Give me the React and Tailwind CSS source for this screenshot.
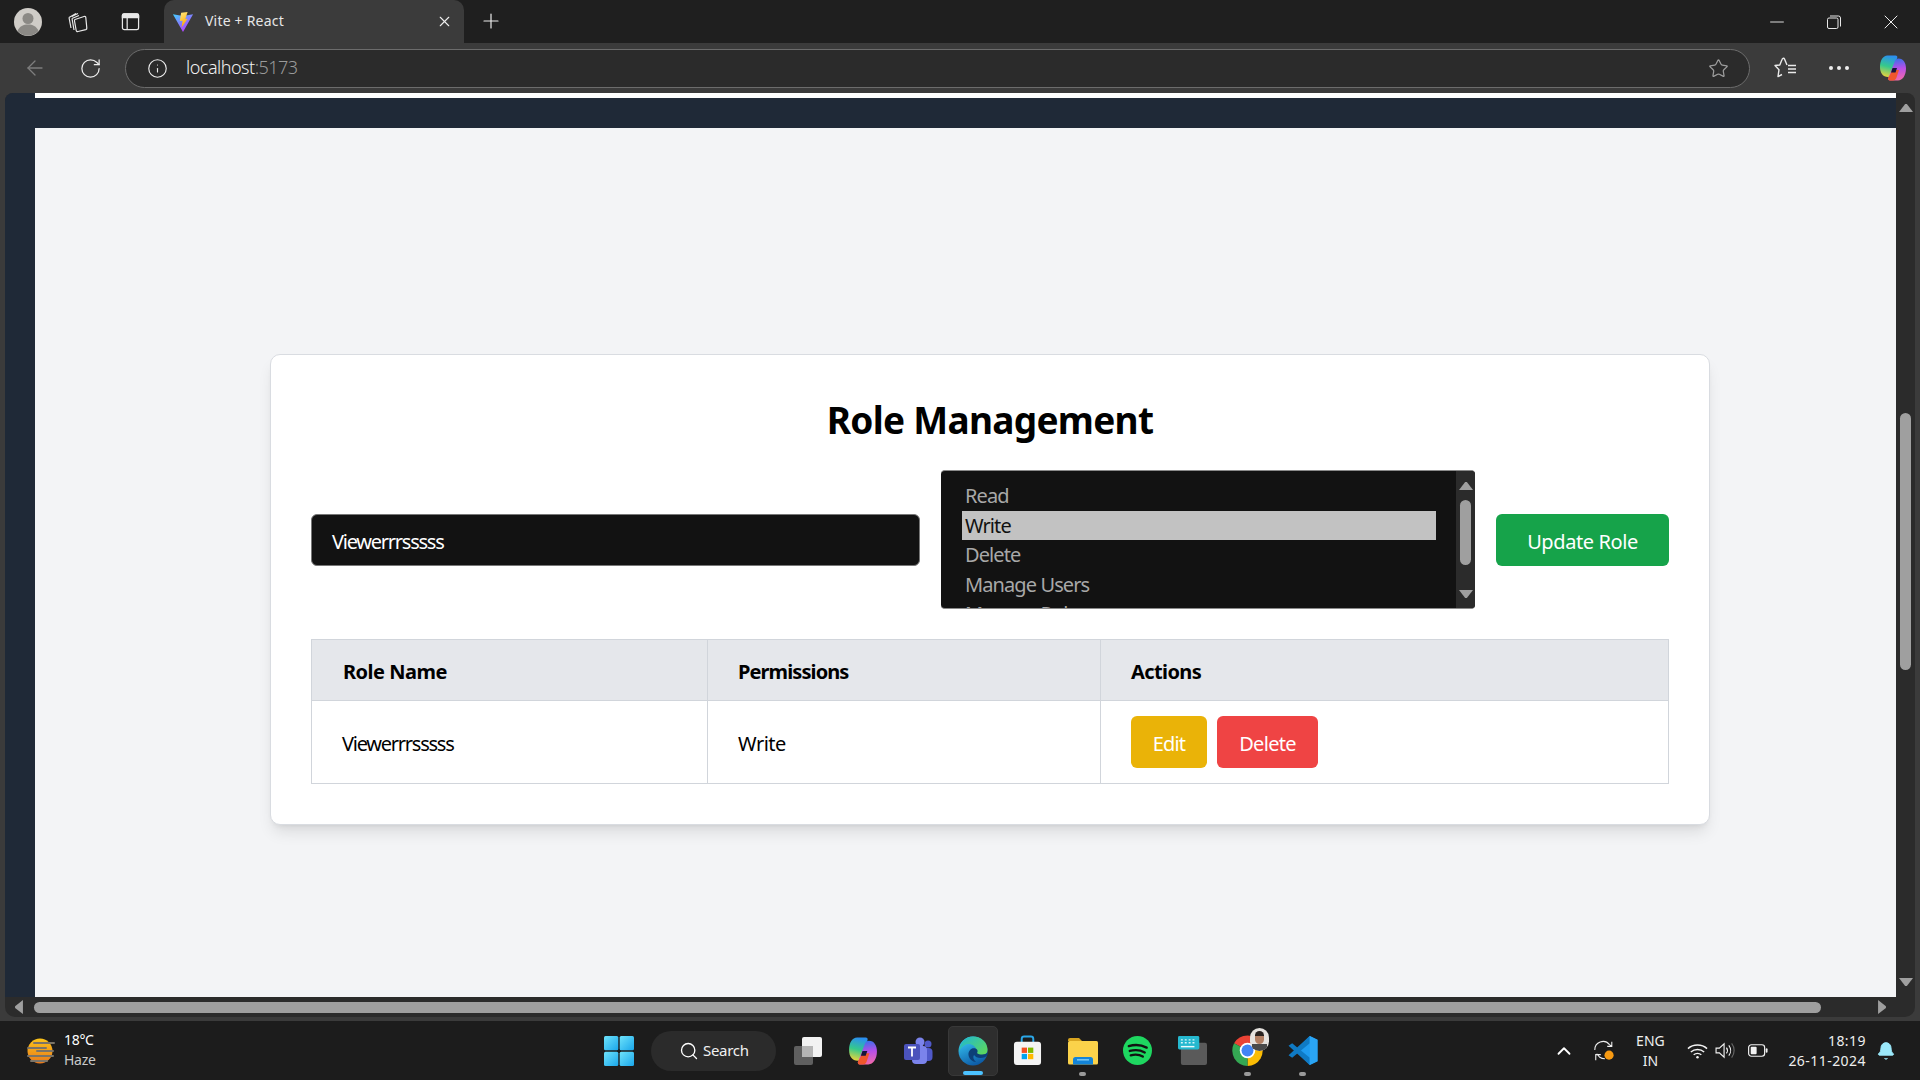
import { ArrowLeft, RotateCw, Info, Star, X, Plus, Minus, Search, ChevronUp, Bell } from 'lucide-react';

// Small triangle used by the native looking scrollbars
function Arrow({ dir, className }) {
    const points = {
        up: '0,10 7,1 9,1 16,10',
        down: '0,1 16,1 9,10 7,10',
        left: '10,0 10,16 1,9 1,7',
        right: '1,0 1,16 10,9 10,7',
    };
    const box = dir === 'up' || dir === 'down' ? '0 0 16 11' : '0 0 11 16';
    return (
        <svg viewBox={box} className={className} fill="#9f9f9f">
            <polygon points={points[dir]} />
        </svg>
    );
}

function Avatar() {
    return (
        <svg viewBox="0 0 28 28" className="w-[28px] h-[28px]">
            <circle cx="14" cy="14" r="14" fill="#cfccc7" />
            <circle cx="14" cy="10.500" r="5.500" fill="#8b8985" />
            <path d="M3.500 23c2-5 6-6.500 10.500-6.500s8.500 1.500 10.500 6.500a14 14 0 0 1-21 0z" fill="#8b8985" />
        </svg>
    );
}

function CollectionsIcon() {
    return (
        <svg viewBox="0 0 22 22" className="w-[22px] h-[22px]" fill="none" stroke="#e8e8e8" strokeWidth="1.200">
            <path d="M3 6.500 10 2.500M3 6.500 5 17M5.800 5.500 12 2.500" />
            <path d="M6 7.500 13 4.500M6 7.500 8 19" />
            <path d="M9 8.500 18 5.500c1-.3 1.700.2 1.800 1l1 10.500c.1.800-.3 1.400-1 1.600L12 20.500c-1 .2-1.700-.2-1.800-1L8.500 10c-.1-.7 0-1.200.5-1.500z" />
        </svg>
    );
}

function TabLayoutIcon() {
    return (
        <svg viewBox="0 0 20 20" className="w-[19px] h-[19px]" fill="none" stroke="#e8e8e8" strokeWidth="1.300">
            <rect x="1.500" y="2" width="17" height="16.500" rx="2" />
            <path d="M1.500 3.500a1.500 1.500 0 0 1 1.500-1.500h14a1.500 1.500 0 0 1 1.500 1.500V6h-17z" fill="#e8e8e8" />
            <path d="M6.500 6v12.500" />
        </svg>
    );
}

function ViteIcon() {
    return (
        <svg viewBox="0 0 24 24" className="w-[22px] h-[22px]">
            <defs>
                <linearGradient id="viteBody" x1="0" y1="0" x2="0.7" y2="1">
                    <stop offset="0" stopColor="#41d1ff" />
                    <stop offset="1" stopColor="#bd34fe" />
                </linearGradient>
                <linearGradient id="viteBolt" x1="0" y1="0" x2="0.3" y2="1">
                    <stop offset="0" stopColor="#ffea83" />
                    <stop offset="1" stopColor="#ffa800" />
                </linearGradient>
            </defs>
            <polygon points="1,3.500 12,5.500 23,3.500 12,23" fill="url(#viteBody)" />
            <polygon points="10,2 17,1 14.500,9 17,8.500 10.500,18 11.500,10.500 8.500,11" fill="url(#viteBolt)" />
        </svg>
    );
}

function RestoreIcon() {
    return (
        <svg viewBox="0 0 14 14" className="w-[14px] h-[14px]" fill="none" stroke="#e8e8e8" strokeWidth="1">
            <rect x="0.500" y="3" width="10.500" height="10.500" rx="1.500" />
            <path d="M3 1h8.500a2 2 0 0 1 2 2v8.500" />
        </svg>
    );
}

function FavoritesIcon() {
    return (
        <svg viewBox="0 0 24 22" className="w-[24px] h-[22px]" fill="none" stroke="#eaeaea" strokeWidth="1.400">
            <path d="M8 2.500 5.800 8 1 8.500l4 4.200L4 19.500l4-2" strokeLinejoin="round" />
            <path d="M8 2.500C9 1 10 1 10.500 2L13 8" />
            <path d="M14 12h8M14 15.500h8M14 8.500h8" />
        </svg>
    );
}

function CopilotIcon({ size }) {
    return (
        <svg viewBox="0 0 28 28" style={{ width: size, height: size }}>
            <defs>
                <linearGradient id={`copA${size}`} x1="0.5" y1="0" x2="0.3" y2="1">
                    <stop offset="0" stopColor="#2b8ff0" />
                    <stop offset="0.5" stopColor="#35c98c" />
                    <stop offset="1" stopColor="#efd43a" />
                </linearGradient>
                <linearGradient id={`copB${size}`} x1="0.5" y1="0" x2="0.6" y2="1">
                    <stop offset="0" stopColor="#3a6fe8" />
                    <stop offset="0.45" stopColor="#b64fe8" />
                    <stop offset="1" stopColor="#f36aa8" />
                </linearGradient>
            </defs>
            <path d="M8.500 1.500h8c1.500 0 2.200 1.200 1.700 2.500L12.500 20c-.8 2-1.800 3-3.500 3C4 23 1 19 1 13 1 6.500 4 1.500 8.500 1.500z" fill={`url(#copA${size})`} />
            <path d="M19.500 4.500c5 0 7.500 4.500 7.500 10 0 7-3.500 12-8 12h-8c-1.500 0-2.200-1.200-1.700-2.500L15.500 8c.6-2 2-3.500 4-3.500z" fill={`url(#copB${size})`} />
            <path d="M13.500 16h6.500l-2.500 7.500c-.5 1.500-1.500 3-3.500 3h-3c-1.500 0-2.200-1.200-1.700-2.500z" fill="#f0572c" />
            <path d="M13.500 14h4.500l-1.500 4.500H12z" fill="#16153a" />
        </svg>
    );
}

function TabStrip() {
    return (
        <div className="h-[43px] bg-[#1f1f1f] flex items-end shrink-0">
            <div className="w-[56px] h-[43px] flex items-center justify-center">
                <Avatar />
            </div>
            <div className="w-[42px] h-[43px] flex items-center justify-center">
                <CollectionsIcon />
            </div>
            <div className="w-[64px] h-[43px] flex items-center justify-center">
                <TabLayoutIcon />
            </div>
            <div className="ml-[2px] w-[300px] h-[43px] bg-[#3b3b3b] rounded-t-[10px] flex items-center px-[8px]">
                <ViteIcon />
                <span className="ml-[11px] mb-[2px] text-[14px] tracking-[0.2px] text-[#e6e6e6]">Vite + React</span>
                <X className="ml-auto mr-[3px] w-[17px] h-[17px] text-[#eeeeee]" strokeWidth={1.5} />
            </div>
            <div className="w-[54px] h-[43px] flex items-center justify-center pb-[1px]">
                <Plus className="w-[24px] h-[24px] text-[#eeeeee]" strokeWidth={1.2} />
            </div>
            <div className="ml-auto h-[43px] flex items-center text-[#eeeeee]">
                <div className="w-[57px] flex justify-center"><Minus className="w-[22px] h-[22px]" strokeWidth={1} /></div>
                <div className="w-[57px] flex justify-center"><RestoreIcon /></div>
                <div className="w-[58px] flex justify-center"><X className="w-[24px] h-[24px]" strokeWidth={1} /></div>
            </div>
        </div>
    );
}

function Toolbar() {
    return (
        <div className="h-[50px] bg-[#3b3b3b] flex items-center shrink-0">
            <div className="w-[70px] flex justify-center">
                <ArrowLeft className="w-[24px] h-[24px] text-[#7e7e7e]" strokeWidth={1.3} />
            </div>
            <div className="w-[40px] flex justify-center">
                <RotateCw className="w-[23px] h-[23px] text-[#eeeeee]" strokeWidth={1.3} />
            </div>
            <div className="ml-[15px] w-[1625px] h-[39px] rounded-full bg-[#2b2b2b] border border-[#6c6c6c] flex items-center pl-[21px] pr-[20px]">
                <Info className="w-[21px] h-[21px] text-[#eeeeee]" strokeWidth={1.3} />
                <span className="ml-[18px] mb-[2px] text-[18px] tracking-[-0.5px] text-[#f0f0f0] font-light">
                    localhost<span className="text-[#9a9a9a]">:5173</span>
                </span>
                <Star className="ml-auto w-[21px] h-[21px] text-[#9d9d9d]" strokeWidth={1.4} />
            </div>
            <div className="ml-[24px]"><FavoritesIcon /></div>
            <div className="ml-[31px] flex gap-[4px]">
                <span className="w-[4px] h-[4px] rounded-full bg-[#eeeeee]"></span>
                <span className="w-[4px] h-[4px] rounded-full bg-[#eeeeee]"></span>
                <span className="w-[4px] h-[4px] rounded-full bg-[#eeeeee]"></span>
            </div>
            <div className="ml-[30px]"><CopilotIcon size={28} /></div>
        </div>
    );
}

function PermissionSelect() {
    const options = ['Read', 'Write', 'Delete', 'Manage Users', 'Manage Roles'];
    return (
        <div className="w-[534px] h-[139px] bg-[#121212] rounded-[4px] border-t border-b border-[#8a8a8a] overflow-hidden flex">
            <div className="flex-1 pt-[10px] pl-[21px] pr-[20px] overflow-hidden">
                {options.map((name) => (
                    <div
                        key={name}
                        className={`h-[29.6px] pl-[3px] leading-[29.6px] text-[20px] tracking-[-0.9px] ${name === 'Write' ? 'bg-[#c2c2c2] text-[#111111]' : 'text-[#a8a8a8]'}`}
                    >
                        {name}
                    </div>
                ))}
            </div>
            <div className="w-[19px] bg-[#2b2b2b] flex flex-col items-center justify-between pt-[10px] pb-[9px] relative">
                <Arrow dir="up" className="w-[14px] h-[10px]" />
                <div className="w-[11px] h-[65px] rounded-full bg-[#9f9f9f] absolute top-[29px]"></div>
                <Arrow dir="down" className="w-[14px] h-[10px]" />
            </div>
        </div>
    );
}

function RoleManagement() {
    return (
        <div className="w-[1440px] bg-white border border-[#d9dce1] rounded-[10px] shadow-lg pt-[40px] px-[40px] pb-[40px]">
            <h1 className="text-center text-[37px] leading-[50px] font-bold tracking-[-0.7px] text-black">Role Management</h1>
            <div className="mt-[25px] flex items-start">
                <div className="mt-[44px] w-[609px] h-[52px] bg-[#121212] rounded-[6px] border border-[#777777] flex items-center pl-[20px] pt-[3px] text-[20px] tracking-[-1.25px] text-white">
                    Viewerrrsssss
                </div>
                <div className="ml-[21px]">
                    <PermissionSelect />
                </div>
                <button className="mt-[44px] ml-[21px] w-[173px] h-[52px] bg-[#16a34a] rounded-[6px] pt-[3px] text-white text-[20px] tracking-[-0.4px]">Update Role</button>
            </div>
            <table className="mt-[30px] w-[1358px] border-collapse table-fixed text-[20px] tracking-[-0.5px]">
                <thead>
                    <tr className="h-[61px] bg-[#e5e7eb]">
                        <th className="w-[396px] border border-[#d1d5db] pl-[31px] pt-[3px] text-left font-bold text-black">Role Name</th>
                        <th className="w-[393px] border border-[#d1d5db] pl-[30px] pt-[3px] text-left font-bold tracking-[-0.9px] text-black">Permissions</th>
                        <th className="border border-[#d1d5db] pl-[30px] pt-[3px] text-left font-bold tracking-[-0.6px] text-black">Actions</th>
                    </tr>
                </thead>
                <tbody>
                    <tr className="h-[83px]">
                        <td className="border border-[#d1d5db] pl-[30px] pt-[3px] tracking-[-1.25px] text-black">Viewerrrsssss</td>
                        <td className="border border-[#d1d5db] pl-[30px] pt-[3px] text-black">Write</td>
                        <td className="border border-[#d1d5db] pl-[30px]">
                            <div className="flex gap-[10px]">
                                <button className="w-[76px] h-[52px] bg-[#eab308] rounded-[6px] pt-[3px] tracking-[-0.8px] text-white">Edit</button>
                                <button className="w-[101px] h-[52px] bg-[#ef4444] rounded-[6px] pt-[3px] tracking-[-0.7px] text-white">Delete</button>
                            </div>
                        </td>
                    </tr>
                </tbody>
            </table>
        </div>
    );
}

function Viewport() {
    return (
        <div className="h-[928px] bg-[#3b3b3b] pl-[5px] pr-[5px] pb-[4px] shrink-0">
            <div className="h-full rounded-t-[8px] rounded-b-[10px] overflow-hidden bg-[#2b2b2b] flex flex-col">
                <div className="h-[904px] flex">
                    <div className="w-[30px] bg-[#1f2937]"></div>
                    <div className="w-[1861px] flex flex-col">
                        <div className="h-[5px] bg-white"></div>
                        <div className="h-[30px] bg-[#1f2937]"></div>
                        <div className="flex-1 bg-[#f3f4f6] pt-[226px] pl-[235px]">
                            <RoleManagement />
                        </div>
                    </div>
                    <div className="w-[19px] relative flex flex-col items-center justify-between pt-[10px] pb-[10px]">
                        <Arrow dir="up" className="w-[14px] h-[10px]" />
                        <div className="absolute top-[320px] w-[11px] h-[257px] rounded-full bg-[#9f9f9f]"></div>
                        <Arrow dir="down" className="w-[14px] h-[10px]" />
                    </div>
                </div>
                <div className="h-[20px] flex items-center">
                    <Arrow dir="left" className="ml-[9px] w-[10px] h-[14px]" />
                    <div className="ml-[10px] w-[1787px] h-[11px] rounded-full bg-[#9f9f9f]"></div>
                    <Arrow dir="right" className="ml-[56px] w-[10px] h-[14px]" />
                </div>
            </div>
        </div>
    );
}

function WeatherIcon() {
    return (
        <svg viewBox="0 0 30 28" className="w-[30px] h-[28px]">
            <defs>
                <linearGradient id="sun" x1="0" y1="0" x2="0" y2="1">
                    <stop offset="0" stopColor="#fcc419" />
                    <stop offset="1" stopColor="#e8781c" />
                </linearGradient>
            </defs>
            <circle cx="15" cy="14" r="12.500" fill="url(#sun)" />
            <path d="M9 6h20M3 11h18M12 14h16M3 19h25M6 24h16" stroke="#7b7468" strokeWidth="2" strokeLinecap="round" />
        </svg>
    );
}

function WindowsIcon() {
    return (
        <svg viewBox="0 0 30 30" className="w-[30px] h-[30px]">
            <defs>
                <linearGradient id="win" x1="0" y1="0" x2="1" y2="1">
                    <stop offset="0" stopColor="#6ee3fb" />
                    <stop offset="1" stopColor="#1aa6ea" />
                </linearGradient>
            </defs>
            <rect x="0" y="0" width="14.300" height="14.300" rx="1.500" fill="url(#win)" />
            <rect x="15.700" y="0" width="14.300" height="14.300" rx="1.500" fill="url(#win)" />
            <rect x="0" y="15.700" width="14.300" height="14.300" rx="1.500" fill="url(#win)" />
            <rect x="15.700" y="15.700" width="14.300" height="14.300" rx="1.500" fill="url(#win)" />
        </svg>
    );
}

function TaskViewIcon() {
    return (
        <svg viewBox="0 0 30 30" className="w-[30px] h-[30px]">
            <rect x="1" y="10" width="19" height="19" rx="2" fill="#5f5f5f" />
            <rect x="9" y="1" width="20" height="20" rx="2" fill="#f2f2f2" />
            <rect x="9" y="10" width="11" height="11" fill="#b5b5b5" />
        </svg>
    );
}

function TeamsIcon() {
    return (
        <svg viewBox="0 0 30 30" className="w-[30px] h-[30px]">
            <circle cx="17" cy="6" r="4.500" fill="#7b83eb" />
            <circle cx="25" cy="8" r="3.500" fill="#5059c9" />
            <rect x="19" y="12" width="10.500" height="13" rx="4" fill="#5059c9" />
            <rect x="9" y="10" width="15" height="18" rx="4" fill="#7b83eb" />
            <rect x="1" y="8" width="16" height="16" rx="2" fill="#4b53bc" />
            <path d="M5 11.500h8M9 11.500v9" stroke="#ffffff" strokeWidth="1.800" />
        </svg>
    );
}

function EdgeIcon() {
    return (
        <svg viewBox="0 0 30 30" className="w-[30px] h-[30px]">
            <defs>
                <linearGradient id="edgeA" x1="0.2" y1="0.1" x2="0.6" y2="1">
                    <stop offset="0" stopColor="#35c1f1" />
                    <stop offset="1" stopColor="#0c59a4" />
                </linearGradient>
                <linearGradient id="edgeB" x1="0" y1="0" x2="1" y2="0.8">
                    <stop offset="0" stopColor="#1bb6d9" />
                    <stop offset="1" stopColor="#5fd85a" />
                </linearGradient>
            </defs>
            <circle cx="15" cy="15" r="14.500" fill="url(#edgeA)" />
            <path d="M15 .5c8.500 0 14.500 6 14.500 13 0 4.500-3.500 6.500-7 6.500-2 0-4-.5-5-1.500 1.500-1 2-2.500 1.500-4C17.500 10 13 7 8 8.500 4 10 1.500 13 1 17 1 7 7 .5 15 .5z" fill="url(#edgeB)" />
            <path d="M29.500 19c-1 2-4 3-7 3-3 0-5-1-6.500-3-1.500 2-.5 5 2 7-3.500 0-7-3-7.500-7-.3-2 .5-4 2-5.500 2-2 5-1.500 6.500 0 .8 1 .7 2.500 0 3.500 1 1 3 1.500 5 1.500 2.500 0 4.500-1 5.500-2z" fill="#0d3f78" />
        </svg>
    );
}

function StoreIcon() {
    return (
        <svg viewBox="0 0 30 32" className="w-[29px] h-[31px]">
            <path d="M9 9V4c0-1.500 1-2.500 2.500-2.500h7c1.500 0 2.500 1 2.500 2.500v5" fill="none" stroke="#2aa7e8" strokeWidth="2" />
            <rect x="1" y="7" width="28" height="24" rx="3" fill="#f4f4f4" />
            <rect x="9" y="13" width="5.500" height="5.500" fill="#f25022" />
            <rect x="15.500" y="13" width="5.500" height="5.500" fill="#7fba00" />
            <rect x="9" y="19.500" width="5.500" height="5.500" fill="#00a4ef" />
            <rect x="15.500" y="19.500" width="5.500" height="5.500" fill="#ffb900" />
        </svg>
    );
}

function FilesIcon() {
    return (
        <svg viewBox="0 0 30 28" className="w-[30px] h-[28px]">
            <path d="M0 3a2 2 0 0 1 2-2h9l3 3h-14z" fill="#d9a520" />
            <rect x="0" y="4" width="30" height="23.500" rx="1.500" fill="#fbd24a" />
            <path d="M5 27.500v-5a2.500 2.500 0 0 1 2.500-2.500h15a2.500 2.500 0 0 1 2.500 2.500v5z" fill="#1384d8" />
            <rect x="9" y="22" width="12" height="1.600" fill="#72c4f2" />
        </svg>
    );
}

function SpotifyIcon() {
    return (
        <svg viewBox="0 0 30 30" className="w-[29px] h-[29px]">
            <circle cx="15" cy="15" r="15" fill="#1ed760" />
            <path d="M6 10.500c6-1.800 13-1.300 18.500 1.500M7 15.500c5-1.400 11-1 15.500 1.500M8 20c4-1 9-.8 12.500 1.300" fill="none" stroke="#121212" strokeWidth="2.400" strokeLinecap="round" />
        </svg>
    );
}

function KeyboardAppIcon() {
    return (
        <svg viewBox="0 0 30 32" className="w-[29px] h-[31px]">
            <rect x="3" y="8" width="27" height="23" rx="2" fill="#5a5a5a" />
            <rect x="0" y="1" width="22" height="14" rx="1.500" fill="#25b8cf" />
            <path d="M3 5h2M7 5h2M11 5h2M15 5h2M3 8h2M7 8h2M11 8h2M15 8h2" stroke="#d7f5fa" strokeWidth="1.500" />
            <path d="M3 12h14" stroke="#eafafd" strokeWidth="1.500" />
        </svg>
    );
}

function ChromeIcon() {
    return (
        <div className="relative w-[31px] h-[31px]">
            <svg viewBox="0 0 30 30" className="w-[31px] h-[31px]">
                <path d="M15 15 2 8A15 15 0 0 1 28 8z" fill="#ea4335" />
                <path d="M15 15 28 8a15 15 0 0 1-13 22z" fill="#fbbc04" />
                <path d="M15 15 15 30A15 15 0 0 1 2 8z" fill="#34a853" />
                <circle cx="15" cy="15" r="7.500" fill="#ffffff" />
                <circle cx="15" cy="15" r="5.800" fill="#4285f4" />
            </svg>
            <div className="absolute top-[-7px] right-[-6px] w-[19px] h-[23px] rounded-full bg-[#e6e3df] flex flex-col items-center overflow-hidden">
                <div className="mt-[3px] w-[9px] h-[5px] rounded-t-full bg-[#2a2320]"></div>
                <div className="w-[9px] h-[8px] rounded-b-full bg-[#b27f63]"></div>
                <div className="w-[15px] h-[7px] bg-[#4a4a4a]"></div>
            </div>
        </div>
    );
}

function VsCodeIcon() {
    return (
        <svg viewBox="0 0 30 30" className="w-[31px] h-[31px]">
            <path d="M22 1 29.500 4.500v21L22 29 8 15z" fill="#1f9cf0" />
            <path d="M22 1 22 29 1.500 10.500 5 8l17 14V8L5 22l-3.500-2.500z" fill="#0f7ac4" />
            <path d="M22 1 29.500 4.500v21L22 29z" fill="#2aa5f5" />
        </svg>
    );
}

function SyncIcon() {
    return (
        <svg viewBox="0 0 24 24" className="w-[22px] h-[22px]" fill="none" stroke="#eeeeee" strokeWidth="1.200">
            <path d="M2 11A9 9 0 0 1 18 5l2.500 2M20.500 2v5h-5" />
            <path d="M4 15l3 3.500c2 1.500 4 2 6 2M3 22v-6h5.500" />
            <circle cx="17.500" cy="16.500" r="5" fill="#f79a12" stroke="none" />
        </svg>
    );
}

function WifiIcon() {
    return (
        <svg viewBox="0 0 22 16" className="w-[21px] h-[16px]" fill="none" stroke="#f2f2f2" strokeWidth="1.500">
            <path d="M1 5.500c5.500-5 14.500-5 20 0M4 9c4-3.500 10-3.500 14 0M7 12c2.300-2 5.700-2 8 0" />
            <circle cx="11" cy="14.500" r="1.300" fill="#f2f2f2" stroke="none" />
        </svg>
    );
}

function VolumeIcon() {
    return (
        <svg viewBox="0 0 22 18" className="w-[21px] h-[17px]" fill="none" stroke="#f2f2f2" strokeWidth="1.200">
            <path d="M1 6.500h3.500L9.500 2v14l-5-4.500H1z" />
            <path d="M12 6c1.300 1.800 1.300 4.200 0 6M14.500 3.500c2.500 3.200 2.500 7.800 0 11" />
            <path d="M17.500 1.500c3.500 4.500 3.500 10.500 0 15" stroke="#666666" />
        </svg>
    );
}

function BatteryIcon() {
    return (
        <svg viewBox="0 0 22 14" className="w-[20px] h-[13px]">
            <rect x="0.700" y="0.700" width="17.600" height="12.600" rx="3" fill="none" stroke="#f2f2f2" strokeWidth="1.300" />
            <rect x="3" y="3" width="6.500" height="8" rx="1" fill="#f2f2f2" />
            <rect x="19.500" y="4.500" width="2" height="5" rx="1" fill="#f2f2f2" />
        </svg>
    );
}

function AppSlot({ children, dot }) {
    return (
        <div className="relative w-[55px] h-[50px] flex items-center justify-center">
            {children}
            {dot && <span className="absolute bottom-[0px] w-[7px] h-[4px] rounded-full bg-[#9a9a9a]"></span>}
        </div>
    );
}

function Taskbar() {
    return (
        <div className="h-[59px] bg-[#1c1c1c] flex items-center text-white shrink-0">
            <div className="w-[604px] flex items-center pl-[25px]">
                <WeatherIcon />
                <div className="ml-[9px] mb-[2px] text-[14px] leading-[20px] tracking-[-0.3px]">
                    <div>18°C</div>
                    <div className="text-[#c9c9c9]">Haze</div>
                </div>
            </div>
            <WindowsIcon />
            <div className="ml-[17px] w-[125px] h-[40px] rounded-full bg-[#2b2b2b] flex items-center pl-[28px]">
                <Search className="w-[20px] h-[20px]" strokeWidth={1.600} />
                <span className="ml-[4px] text-[15px] tracking-[-0.3px] text-[#f0f0f0]">Search</span>
            </div>
            <div className="ml-[4px] flex items-center">
                <AppSlot><TaskViewIcon /></AppSlot>
                <AppSlot><CopilotIcon size={30} /></AppSlot>
                <AppSlot><TeamsIcon /></AppSlot>
                <div className="relative w-[50px] mx-[2.500px] h-[50px] rounded-[5px] bg-[#2e2e2e] border border-[#383838] flex items-center justify-center">
                    <EdgeIcon />
                    <span className="absolute bottom-[0px] w-[20px] h-[4px] rounded-full bg-[#4cc2ff]"></span>
                </div>
                <AppSlot><StoreIcon /></AppSlot>
                <AppSlot dot><FilesIcon /></AppSlot>
                <AppSlot><SpotifyIcon /></AppSlot>
                <AppSlot><KeyboardAppIcon /></AppSlot>
                <AppSlot dot><ChromeIcon /></AppSlot>
                <AppSlot dot><VsCodeIcon /></AppSlot>
            </div>
            <div className="ml-auto flex items-center">
                <ChevronUp className="w-[22px] h-[22px]" strokeWidth={2} />
                <div className="ml-[18px]"><SyncIcon /></div>
                <div className="ml-[10px] w-[50px] text-center text-[14px] leading-[20px] text-[#eeeeee]">
                    <div>ENG</div>
                    <div>IN</div>
                </div>
                <div className="ml-[12px]"><WifiIcon /></div>
                <div className="ml-[7px]"><VolumeIcon /></div>
                <div className="ml-[12px]"><BatteryIcon /></div>
                <div className="ml-[20px] text-right text-[14px] leading-[20px] tracking-[0.45px] text-[#eeeeee]">
                    <div>18:19</div>
                    <div>26-11-2024</div>
                </div>
                <Bell className="ml-[10px] mr-[24px] w-[20px] h-[22px] text-[#9be9fb] fill-[#9be9fb]" strokeWidth={1.200} />
            </div>
        </div>
    );
}

export default function App() {
    return (
        <div className="w-[1920px] h-[1080px] overflow-hidden flex flex-col font-['Noto_Sans',sans-serif]">
            <TabStrip />
            <Toolbar />
            <Viewport />
            <Taskbar />
        </div>
    );
}
